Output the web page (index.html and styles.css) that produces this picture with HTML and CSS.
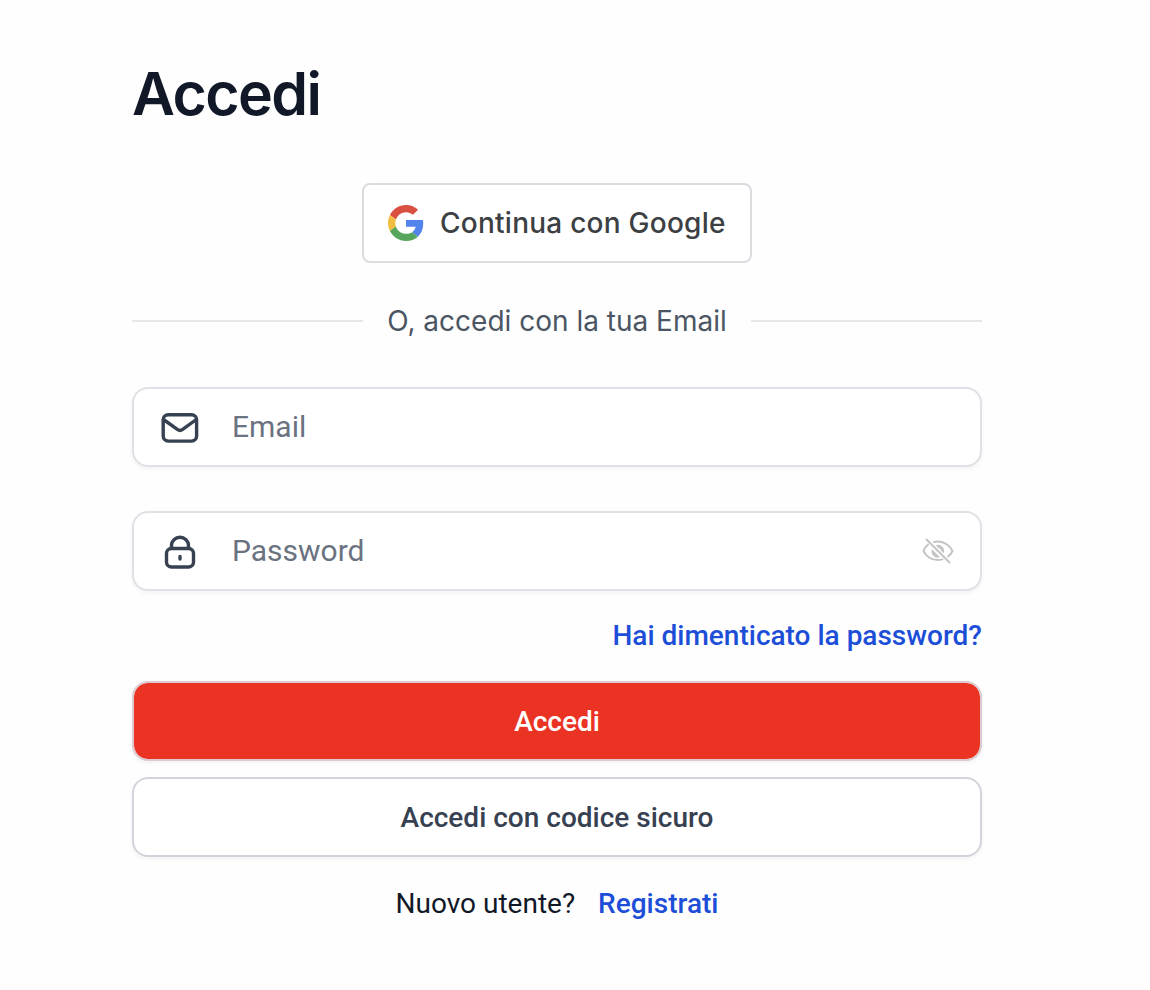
FILE: index.html
```html
<!DOCTYPE html>
<html lang="it">
<head>
    <meta charset="UTF-8">
    <meta name="viewport" content="width=device-width, initial-scale=1.0">
    <title>Accedi</title>
    <link rel="stylesheet" href="styles.css">
</head>
<body>
    <main class="login">
        <h1 class="title">Accedi</h1>

        <button type="button" class="google-btn">
            <svg class="google-logo" viewBox="0 0 48 48">
                <path fill="#D95040" d="M24 9.5c3.54 0 6.71 1.22 9.21 3.6l6.85-6.85C35.9 2.38 30.47 0 24 0 14.62 0 6.51 5.38 2.56 13.22l7.98 6.19C12.43 13.72 17.74 9.5 24 9.5z"/>
                <path fill="#5383EC" d="M46.98 24.55c0-1.57-.15-3.09-.38-4.55H24v9.02h12.94c-.58 2.96-2.26 5.48-4.78 7.18l7.73 6c4.51-4.18 7.09-10.36 7.09-17.65z"/>
                <path fill="#F2BE42" d="M10.53 28.59c-.48-1.45-.76-2.99-.76-4.59s.27-3.14.76-4.59l-7.98-6.19C.92 16.46 0 20.12 0 24c0 3.88.92 7.54 2.56 10.78l7.97-6.19z"/>
                <path fill="#58A55C" d="M24 48c6.48 0 11.93-2.13 15.89-5.81l-7.73-6c-2.15 1.45-4.92 2.3-8.16 2.3-6.26 0-11.57-4.22-13.47-9.91l-7.98 6.19C6.51 42.62 14.62 48 24 48z"/>
            </svg>
            <span>Continua con Google</span>
        </button>

        <div class="divider">
            <span>O, accedi con la tua Email</span>
        </div>

        <form class="form">
            <label class="field">
                <svg class="field-icon" viewBox="0 0 40 40">
                    <rect x="3.2" y="7.7" width="33.4" height="26.4" rx="5"/>
                    <path d="M3.5 12.500l14.200 10.200a4 4 0 0 0 4.600 0L36.300 12.500"/>
                </svg>
                <input type="email" placeholder="Email">
            </label>

            <label class="field">
                <svg class="field-icon" viewBox="0 0 40 40">
                    <rect x="6.5" y="17.5" width="27" height="18.500" rx="5"/>
                    <path d="M11.5 17v-2.700a8.500 8 0 0 1 17 0V17M20 25.500v2.500"/>
                </svg>
                <input type="password" placeholder="Password">
                <svg class="eye-icon" viewBox="0 0 32 26">
                    <path class="pupil" d="M10 11.200l8 8A6.200 6.200 0 0 1 10 11.200z"/>
                    <path class="pupil" d="M13.800 7.300A6.200 6.200 0 0 1 21.700 15.300l-2.600-2.600a3.200 3.200 0 0 0-2.700-2.700z"/>
                    <path d="M6 6.500C4 8.300 2.300 10.600 1.500 13c2.200 4.800 7.500 9 14.500 9 1.500 0 3-.2 4.400-.6M12 4c1.300-.3 2.600-.5 4-.5 7 0 12.300 4.700 14.500 9.500-.9 2-2.300 3.900-4.300 5.400M4.500 1.500l23 23"/>
                </svg>
            </label>

            <a class="link forgot" href="#">Hai dimenticato la password?</a>

            <div class="actions">
                <button type="submit" class="btn btn-primary">Accedi</button>
                <button type="button" class="btn">Accedi con codice sicuro</button>
            </div>
        </form>

        <p class="signup">Nuovo utente? <a class="link" href="#">Registrati</a></p>
    </main>
</body>
</html>
```
FILE: styles.css
```css
* {
    box-sizing: border-box;
}

body {
    margin: 0;
    background-color: #fefefe;
    color: #111827;
    font-family: Roboto, sans-serif;
    font-size: 28px;
}

button,
input {
    font-family: inherit;
}

.login {
    width: 850px;
    margin-left: 132px;
    padding-top: 58px;
    display: flex;
    flex-direction: column;
}

.title {
    margin: 0;
    font-family: Inter, sans-serif;
    font-size: 59px;
    line-height: 72px;
    font-weight: 600;
    letter-spacing: -1.6px;
}

.google-btn {
    align-self: center;
    width: 390px;
    height: 80px;
    margin-top: 53px;
    padding: 0 24px;
    display: flex;
    align-items: center;
    gap: 16px;
    background-color: #fff;
    border: 2px solid #dadce0;
    border-radius: 8px;
    color: #3c4043;
    font-family: Inter, sans-serif;
    font-size: 28px;
    font-weight: 500;
    letter-spacing: 0.25px;
    white-space: nowrap;
}

.google-logo {
    width: 36px;
    height: 36px;
    flex: none;
}

.divider {
    margin-top: 38px;
    display: flex;
    align-items: center;
    gap: 24px;
    color: #4b5563;
    font-family: Inter, sans-serif;
    line-height: 40px;
    white-space: nowrap;
}

.divider::before,
.divider::after {
    content: "";
    flex: 1;
    height: 2px;
    background-color: #e5e7eb;
}

.form {
    margin-top: 46px;
    display: flex;
    flex-direction: column;
}

.field {
    height: 80px;
    margin-bottom: 44px;
    padding: 0 26px;
    display: flex;
    align-items: center;
    border: 2px solid #e0e1e6;
    border-radius: 16px;
    background-color: #fff;
    box-shadow: 0 2px 4px rgba(0, 0, 0, 0.05);
}

.field + .forgot {
    margin-top: -19px;
}

.field-icon {
    width: 40px;
    height: 40px;
    flex: none;
    fill: none;
    stroke: #374151;
    stroke-width: 3.4;
    stroke-linecap: round;
    stroke-linejoin: round;
}

.field input {
    flex: 1;
    margin-left: 32px;
    padding: 0 0 2px;
    border: 0;
    outline: none;
    background: none;
    font-size: 30px;
}

.field input::placeholder {
    color: #6b7280;
}

.eye-icon {
    width: 32px;
    height: 26px;
    fill: none;
    stroke: #c4c4c4;
    stroke-width: 2;
    stroke-linecap: round;
}

.eye-icon .pupil {
    fill: #c4c4c4;
    stroke: none;
}

.link {
    color: #1d4ed8;
    font-weight: 500;
    text-decoration: none;
}

.forgot {
    align-self: flex-end;
    line-height: 40px;
}

.actions {
    margin-top: 25px;
    display: flex;
    flex-direction: column;
    gap: 16px;
}

.btn {
    height: 80px;
    border: 2px solid #d1d5db;
    border-radius: 16px;
    background-color: #fff;
    box-shadow: 0 2px 4px rgba(0, 0, 0, 0.05);
    color: #374151;
    font-size: 28px;
    font-weight: 500;
}

.btn-primary {
    background-color: #ea3323;
    background-clip: padding-box;
    border-color: #dccace;
    color: #fff;
}

.signup {
    margin: 27px 0 0;
    line-height: 40px;
    text-align: center;
}

.signup .link {
    margin-left: 16px;
}
```
